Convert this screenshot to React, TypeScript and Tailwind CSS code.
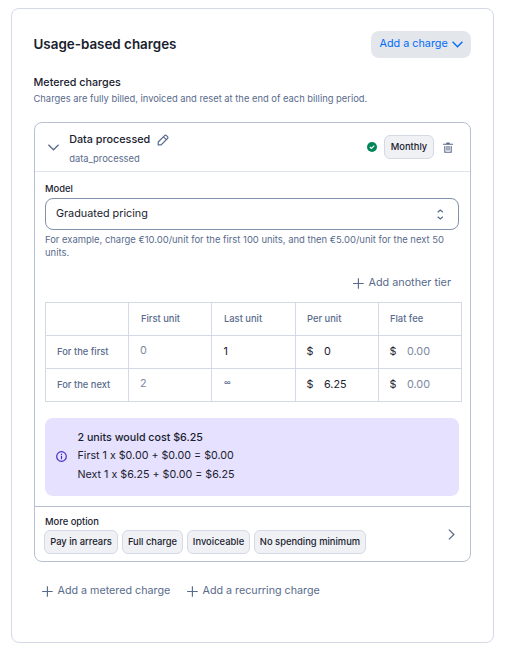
import React from "react";

const Plus = () => (
  <svg width="12" height="12" viewBox="0 0 12 12" fill="none" stroke="#596b8c" strokeWidth="1.15" className="shrink-0">
    <path d="M6.4 1.2V11.8M1.1 6.5H11.7" />
  </svg>
);

const Chip = ({ children, className }: { children: React.ReactNode; className: string }) => (
  <span
    className={`flex h-6 shrink-0 items-center justify-center rounded-md border border-[#d5d9e6] bg-[#f0f1f5] text-[9.4px] font-medium whitespace-nowrap text-[#19212e] ${className}`}
  >
    {children}
  </span>
);

const cell = "flex h-[33px] items-center border-r border-b border-[#d5d9e6]";

const Money = ({ value, muted }: { value: string; muted?: boolean }) => (
  <div className={`${cell} pt-[1px] pl-[10.5px] text-[10.8px] font-normal text-[#19212e]`}>
    <span className="w-[17.5px]">$</span>
    <span className={muted ? "text-[#7c879f]" : ""}>{value}</span>
  </div>
);

export default function App() {
  return (
    <div className="h-[654px] w-[507px] bg-white pt-2 pl-[11px] font-['Inter',sans-serif] text-[#19212e]">
      <main className="flex h-[635px] w-[483px] flex-col rounded-lg border border-[#d5d9e6] px-[22px] pt-[22px]">
        <header className="flex h-[27px] items-center justify-between">
          <h1 className="-ml-[0.5px] pb-[2px] text-[13.4px] leading-[20px] font-semibold whitespace-nowrap">Usage-based charges</h1>
          <button className="flex h-[27px] w-[100px] items-center rounded-lg bg-[#e3e6eb] pl-[8.5px] text-[10.8px] whitespace-nowrap text-[#006cfa]">
            <span className="w-[72.5px] pb-[1px] text-left">Add a charge</span>
            <svg width="11" height="7" viewBox="0 0 11 7" fill="none" stroke="currentColor" strokeWidth="1.3">
              <path d="M.6.7 5.5 5.8 10.4.7" />
            </svg>
          </button>
        </header>

        <h2 className="mt-[17px] -ml-[0.5px] text-[10.75px] leading-[16px] font-medium">Metered charges</h2>
        <p className="mt-[1px] -ml-[0.5px] text-[9.37px] leading-[14px] whitespace-nowrap text-[#596b8c]">
          Charges are fully billed, invoiced and reset at the end of each billing period.
        </p>

        <section className="mt-[16px] flex h-[440px] w-[437px] shrink-0 flex-col rounded-lg border border-[#b7c0d0]">
          <div className="flex h-[49px] shrink-0 items-center border-b border-[#dfe3ec] pl-[12px]">
            <svg width="12" height="7" viewBox="0 0 12 7" fill="none" stroke="#596b8c" strokeWidth="1.3" className="shrink-0">
              <path d="M1.4.8 6.5 5.8 11.6.8" />
            </svg>
            <div className="ml-[10.2px] flex-1">
              <div className="mt-[3px] flex items-center">
                <span className="w-[87.8px] text-[10.8px] leading-[16px] font-medium whitespace-nowrap">Data processed</span>
                <svg width="12" height="12" viewBox="0 0 12 12" fill="none" stroke="#596b8c" strokeWidth="1.2" strokeLinejoin="round" className="mt-[1px]">
                  <path d="M1.2 10.9V8L7.6 1.6Q8.5.7 9.4 1.6L10.5 2.7Q11.3 3.6 10.5 4.5L4.1 10.9ZM6.5 2.9 9.2 5.6" />
                </svg>
              </div>
              <div className="mt-[4px] text-[9.37px] leading-[14px] text-[#596b8c]">data_processed</div>
            </div>
            <svg width="10" height="10" viewBox="0 0 10 10" className="mr-[7px]">
              <circle cx="5" cy="5" r="5" fill="#008559" />
              <path d="M2.8 5 4.4 6.5 7.3 3.6" fill="none" stroke="white" strokeWidth="1.2" />
            </svg>
            <Chip className="w-[50px]">Monthly</Chip>
            <svg width="10" height="11" viewBox="0 0 10 11" fill="none" stroke="#596b8c" strokeWidth="1.1" className="mr-[17px] ml-[9px]">
              <path d="M0 2.3H10M1.8 4V10.2H8.2V4M4 4V8.6M6 4V8.6" />
              <path d="M3 2 3.6.4H6.4L7 2Z" fill="#596b8c" stroke="none" />
            </svg>
          </div>

          <div className="flex flex-col pl-[10px]">
            <label className="mt-[10px] text-[9.37px] leading-[14px] font-medium">Model</label>
            <div className="mt-[2px] flex h-[32px] w-[414px] items-center justify-between rounded-lg border border-[#8290aa] pr-[15px] pl-[10px] text-[10.8px]">
              <span>Graduated pricing</span>
              <svg width="6" height="11" viewBox="0 0 6 11" fill="none" stroke="#596b8c" strokeWidth="1.3">
                <path d="M.7 3.2 3.3 1 5.9 3.2M.7 7.8 3.3 10 5.9 7.8" />
              </svg>
            </div>
            <p className="mt-[3px] text-[9.43px] leading-[13px] whitespace-nowrap text-[#596b8c]">
              For example, charge €10.00/unit for the first 100 units, and then €5.00/unit for the next 50
              <br />
              units.
            </p>
            <button className="mt-[15px] ml-[307px] flex h-[18px] items-center gap-[4.5px] text-[10.8px] whitespace-nowrap text-[#596b8c]">
              <Plus />
              <span>Add another tier</span>
            </button>

            <div className="mt-[10px] grid w-[417px] grid-cols-[84px_83px_84px_83px_83px] border-t border-[#d5d9e6] text-[9.37px] font-medium text-[#596b8c]">
              <div className={`${cell} border-l`} />
              <div className={`${cell} pl-[12px]`}>First unit</div>
              <div className={`${cell} pl-[12px]`}>Last unit</div>
              <div className={`${cell} pl-[11px]`}>Per unit</div>
              <div className={`${cell} pl-[11px]`}>Flat fee</div>
              <div className={`${cell} border-l pl-[11px]`}>For the first</div>
              <div className={`${cell} pb-[1px] pl-[11px] text-[10.8px] font-normal text-[#7c879f]`}>0</div>
              <div className={`${cell} pt-[1px] pl-[11.5px] text-[10.8px] font-normal text-[#19212e]`}>1</div>
              <Money value="0" />
              <Money value="0.00" muted />
              <div className={`${cell} border-l pl-[11px]`}>For the next</div>
              <div className={`${cell} pb-[1px] pl-[11px] text-[10.8px] font-normal text-[#7c879f]`}>2</div>
              <div className={`${cell} pb-[3px] pl-[12px] text-[7px] font-medium`}>∞</div>
              <Money value="6.25" />
              <Money value="0.00" muted />
            </div>

            <div className="mt-[16px] flex h-[78px] w-[414px] items-center rounded-lg bg-[#e6e1ff] pl-[11px] text-[10.7px] whitespace-nowrap">
              <svg width="11" height="11" viewBox="0 0 11 11" fill="none" stroke="#4a2bc2" strokeWidth="1.2" className="-mt-[1px] mr-[10.5px]">
                <circle cx="5.5" cy="5.5" r="4.8" />
                <path d="M5.5 4.8V8.2M5.5 2.7V3.9" />
              </svg>
              <div className="pb-[1px] leading-[18.5px]">
                <div className="font-medium">2 units would cost $6.25</div>
                <div>First 1 x $0.00 + $0.00 = $0.00</div>
                <div>Next 1 x $6.25 + $0.00 = $6.25</div>
              </div>
            </div>
          </div>

          <div className="mt-[10px] flex flex-1 items-center border-t border-[#b7c0d0] pl-[9px]">
            <div className="flex-1">
              <div className="mt-[1px] ml-[1px] text-[9.37px] leading-[14px] font-medium">More option</div>
              <div className="mt-[1px] flex gap-[4px]">
                <Chip className="w-[74px]">Pay in arrears</Chip>
                <Chip className="w-[61px]">Full charge</Chip>
                <Chip className="w-[63px]">Invoiceable</Chip>
                <Chip className="w-[112px]">No spending minimum</Chip>
              </div>
            </div>
            <svg width="7" height="11" viewBox="0 0 7 11" fill="none" stroke="#596b8c" strokeWidth="1.3" className="mr-[15px]">
              <path d="M.9.6 5.9 5.5.9 10.4" />
            </svg>
          </div>
        </section>

        <div className="mt-[20px] flex h-[18px] pl-[7px] text-[10.72px] whitespace-nowrap text-[#596b8c]">
          <button className="flex w-[145px] items-center gap-[4.5px]">
            <Plus />
            <span>Add a metered charge</span>
          </button>
          <button className="flex items-center gap-[4.5px]">
            <Plus />
            <span>Add a recurring charge</span>
          </button>
        </div>
      </main>
    </div>
  );
}
